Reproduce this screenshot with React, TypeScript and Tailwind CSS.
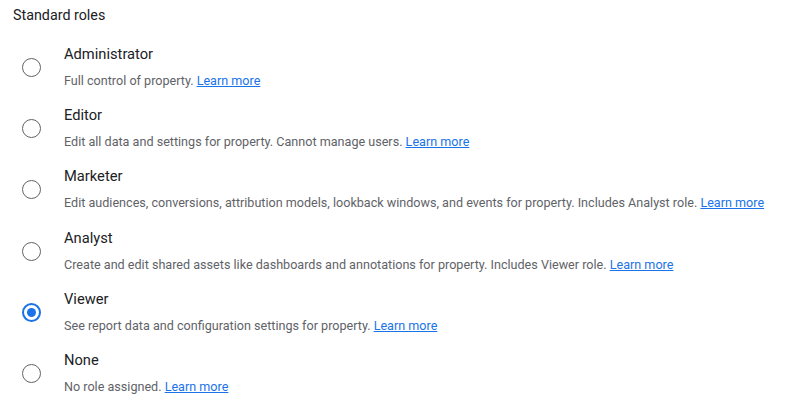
import React from "react";

const roles = [
  { name: "Administrator", desc: "Full control of property." },
  { name: "Editor", desc: "Edit all data and settings for property. Cannot manage users." },
  { name: "Marketer", desc: "Edit audiences, conversions, attribution models, lookback windows, and events for property. Includes Analyst role." },
  { name: "Analyst", desc: "Create and edit shared assets like dashboards and annotations for property. Includes Viewer role." },
  { name: "Viewer", desc: "See report data and configuration settings for property." },
  { name: "None", desc: "No role assigned." },
];

export default function App() {
  const selected = "Viewer";
  return (
    <div className="w-[807px] h-[403px] bg-white overflow-hidden" style={{ fontFamily: "Roboto, 'Liberation Sans', sans-serif" }}>
      <div className="pl-[13px] pt-[5px] text-[14.3px] leading-[20px] text-[#202124]">Standard roles</div>
      <div className="mt-[11px]">
        {roles.map((r) => {
          const isSel = r.name === selected;
          return (
            <div key={r.name} className="flex items-center h-[61.2px] pl-[22px]">
              <div className="mt-[2px] w-[19px] h-[19px] shrink-0 flex items-center justify-center">
                {isSel ? (
                  <div className="w-[19px] h-[19px] rounded-full border-2 border-[#1a73e8] flex items-center justify-center">
                    <div className="w-[9px] h-[9px] rounded-full bg-[#1a73e8]" />
                  </div>
                ) : (
                  <div className="w-[19px] h-[19px] rounded-full border-[1.5px] border-[#5f6368]" />
                )}
              </div>
              <div className="ml-[23px] flex flex-col">
                <div className="text-[14.7px] leading-[20px] text-[#202124] whitespace-nowrap">{r.name}</div>
                <div className="mt-[9px] text-[12.6px] leading-[16px] text-[#5f6368] whitespace-nowrap">
                  {r.desc}{" "}
                  <a href="#" className="text-[#1a73e8] underline">Learn more</a>
                </div>
              </div>
            </div>
          );
        })}
      </div>
    </div>
  );
}
